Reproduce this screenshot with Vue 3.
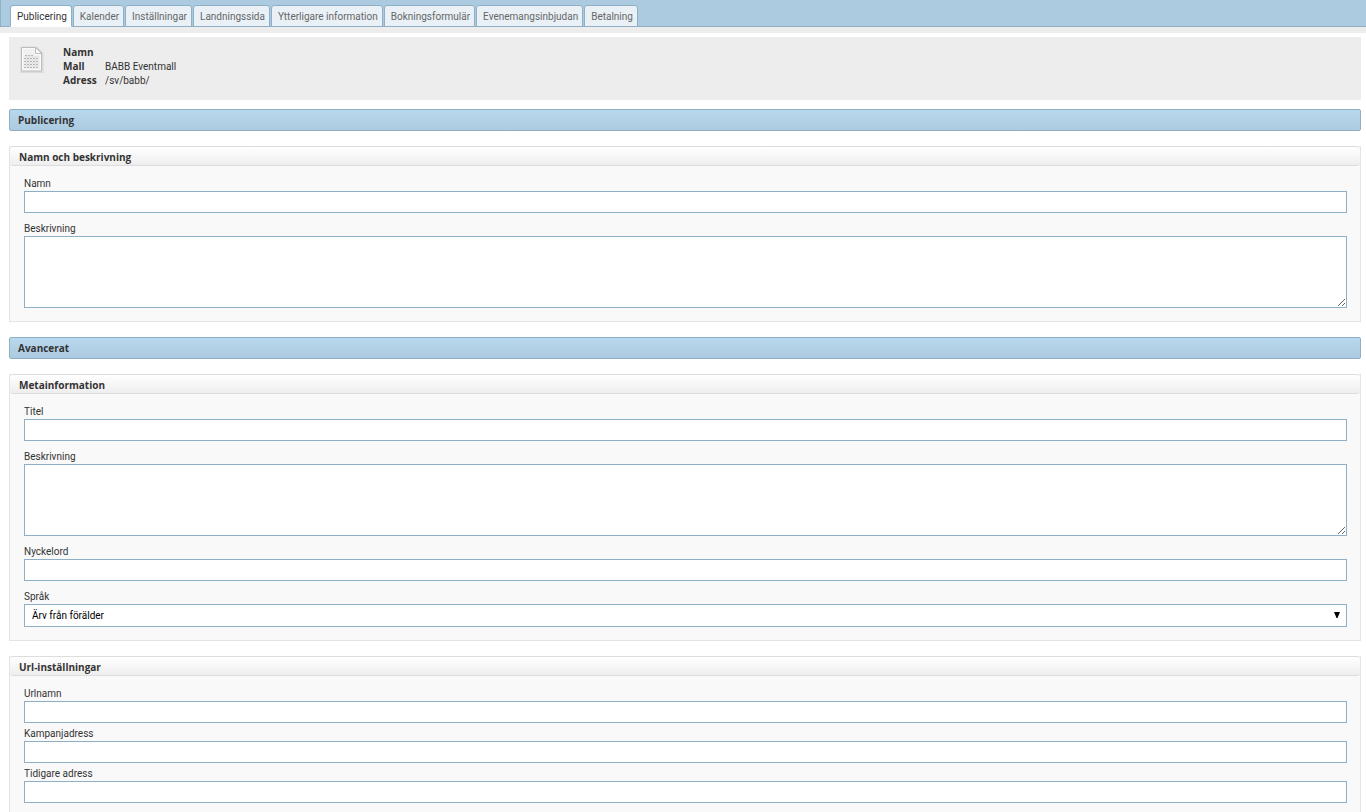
<script setup>
import { ref } from 'vue'

const tabs = [
  'Publicering',
  'Kalender',
  'Inställningar',
  'Landningssida',
  'Ytterligare information',
  'Bokningsformulär',
  'Evenemangsinbjudan',
  'Betalning',
]
const activeTab = ref(tabs[0])

const sections = [
  {
    title: 'Publicering',
    panels: [
      {
        title: 'Namn och beskrivning',
        fields: [
          { id: 'name', label: 'Namn', type: 'text' },
          { id: 'description', label: 'Beskrivning', type: 'area' },
        ],
      },
    ],
  },
  {
    title: 'Avancerat',
    panels: [
      {
        title: 'Metainformation',
        fields: [
          { id: 'meta-title', label: 'Titel', type: 'text' },
          { id: 'meta-description', label: 'Beskrivning', type: 'area' },
          { id: 'keywords', label: 'Nyckelord', type: 'text' },
          { id: 'language', label: 'Språk', type: 'select' },
        ],
      },
      {
        title: 'Url-inställningar',
        compact: true,
        fields: [
          { id: 'url-name', label: 'Urlnamn', type: 'text' },
          { id: 'campaign', label: 'Kampanjadress', type: 'text' },
          { id: 'previous', label: 'Tidigare adress', type: 'text' },
        ],
      },
    ],
  },
]
</script>

<template>
  <div class="page">
    <nav class="tabs">
      <button
        v-for="tab in tabs"
        :key="tab"
        type="button"
        class="tab"
        :class="{ active: tab === activeTab }"
        @click="activeTab = tab"
      >{{ tab }}</button>
    </nav>

    <main class="content">
      <header class="summary">
        <svg class="doc" width="24" height="28" viewBox="0 0 24 28" aria-hidden="true">
          <path d="M1.500 1.500h15l6 6v18.500h-21z" fill="#dcdcdc" stroke="#dadada" stroke-width="2" />
          <path d="M1.500 1.500h14.500l5.500 5.500v18h-20z" fill="#fafafa" stroke="#bdbdbd" />
          <path d="M3 3h12v6h5v14.500h-17z" fill="#f1f1f1" />
          <path d="M15.500 1.500v6h6z" fill="#fff" stroke="#bdbdbd" />
          <g stroke="#b4b4b4" stroke-dasharray="2 1">
            <path d="M5 9.500h9M4 12.500h15M4 15.500h15M4 18.500h15M4 21.500h15" />
            <path d="M5.500 11h13M5.500 14h13M5.500 17h13M5.500 20h13" stroke="#d0d0d0" />
          </g>
        </svg>
        <dl class="facts">
          <dt>Namn</dt><dd></dd>
          <dt>Mall</dt><dd>BABB Eventmall</dd>
          <dt>Adress</dt><dd>/sv/babb/</dd>
        </dl>
      </header>

      <template v-for="section in sections" :key="section.title">
        <h2 class="section-title">{{ section.title }}</h2>
        <section
          v-for="panel in section.panels"
          :key="panel.title"
          class="panel"
          :class="{ compact: panel.compact }"
        >
          <h3 class="panel-title">{{ panel.title }}</h3>
          <div class="fields">
            <div v-for="field in panel.fields" :key="field.id" class="field">
              <label :for="field.id">{{ field.label }}</label>
              <textarea v-if="field.type === 'area'" :id="field.id" class="control"></textarea>
              <div v-else-if="field.type === 'select'" class="select-wrap">
                <select :id="field.id" class="control">
                  <option>Ärv från förälder</option>
                </select>
                <svg class="arrow" width="6" height="6" viewBox="0 0 6 6" aria-hidden="true">
                  <path d="M0 0h6L3.500 6h-1z" fill="#000" />
                </svg>
              </div>
              <input v-else :id="field.id" type="text" class="control" />
            </div>
          </div>
        </section>
      </template>
    </main>
  </div>
</template>

<style>
html {
  overflow: hidden;
}
body {
  margin: 0;
  background: #fff;
}
</style>

<style scoped>
.page,
.page button,
.page select,
.page input,
.page textarea {
  font-family: Roboto, "Noto Sans", sans-serif;
  font-size: 10px;
  box-sizing: border-box;
}
.page {
  color: #333;
  line-height: 14px;
}
.tabs {
  display: flex;
  gap: 1px;
  height: 33px;
  box-sizing: border-box;
  padding: 5px 10px 0;
  border-bottom: 6px solid #ededed;
  background: #accae0;
  box-shadow: inset 1px -1px #8fafc6;
}
.page .tab {
  height: 22px;
  padding: 1px 4px 0 6px;
  border: 1px solid #8fafc6;
  border-radius: 3px 3px 0 0;
  background: #e9f1f7;
  color: #666;
  line-height: 19px;
  white-space: nowrap;
}
.page .tab.active {
  border-bottom-color: #fff;
  background: #fff;
  color: #333;
}
.content {
  padding: 4px 5px 0 9px;
}
.summary {
  display: flex;
  gap: 19px;
  height: 63px;
  box-sizing: border-box;
  padding: 9px 11px;
  background: #ededed;
}
.doc {
  flex: none;
}
.facts {
  display: grid;
  grid-template-columns: 42px 1fr;
  grid-auto-rows: 14px;
  margin: 0;
}
.facts dt,
.section-title,
.panel-title {
  font-family: "Open Sans", "Noto Sans", sans-serif;
  font-size: 10px;
  font-weight: bold;
}
.facts dt {
  line-height: 12px;
}
.facts dd {
  margin: 0;
}
.section-title {
  margin: 15px 0;
  padding: 1px 8px 0;
  border: 1px solid #8fafc6;
  border-radius: 2px;
  background: linear-gradient(#b8d8ee, #accae0);
  line-height: 19px;
}
.summary + .section-title {
  margin-top: 9px;
}
.panel {
  margin-bottom: 15px;
  border: 1px solid #e4e4e4;
  border-top: 0;
  background: #f9f9f9;
}
.panel-title {
  margin: 0;
  padding: 2px 9px 0;
  border: 1px solid #ddd;
  border-width: 1px 0;
  border-radius: 3px;
  background: linear-gradient(#fff, #eee);
  line-height: 16px;
}
.fields {
  display: flex;
  flex-direction: column;
  gap: 8px;
  padding: 10px 13px 13px 14px;
}
.compact .fields {
  gap: 3px;
}
.field label {
  display: block;
  line-height: 15px;
}
.page .control {
  display: block;
  width: 100%;
  height: 22px;
  margin: 0;
  padding: 0 7px;
  border: 1px solid #8fafc6;
  border-radius: 0;
  background: #fff;
  color: #000;
  outline: 0;
}
.page textarea.control {
  height: 72px;
  padding: 4px 7px;
  resize: vertical;
}
.select-wrap {
  position: relative;
}
.page select.control {
  height: 23px;
  line-height: 21px;
  appearance: none;
}
.arrow {
  position: absolute;
  top: 8px;
  right: 7px;
  pointer-events: none;
}
</style>
